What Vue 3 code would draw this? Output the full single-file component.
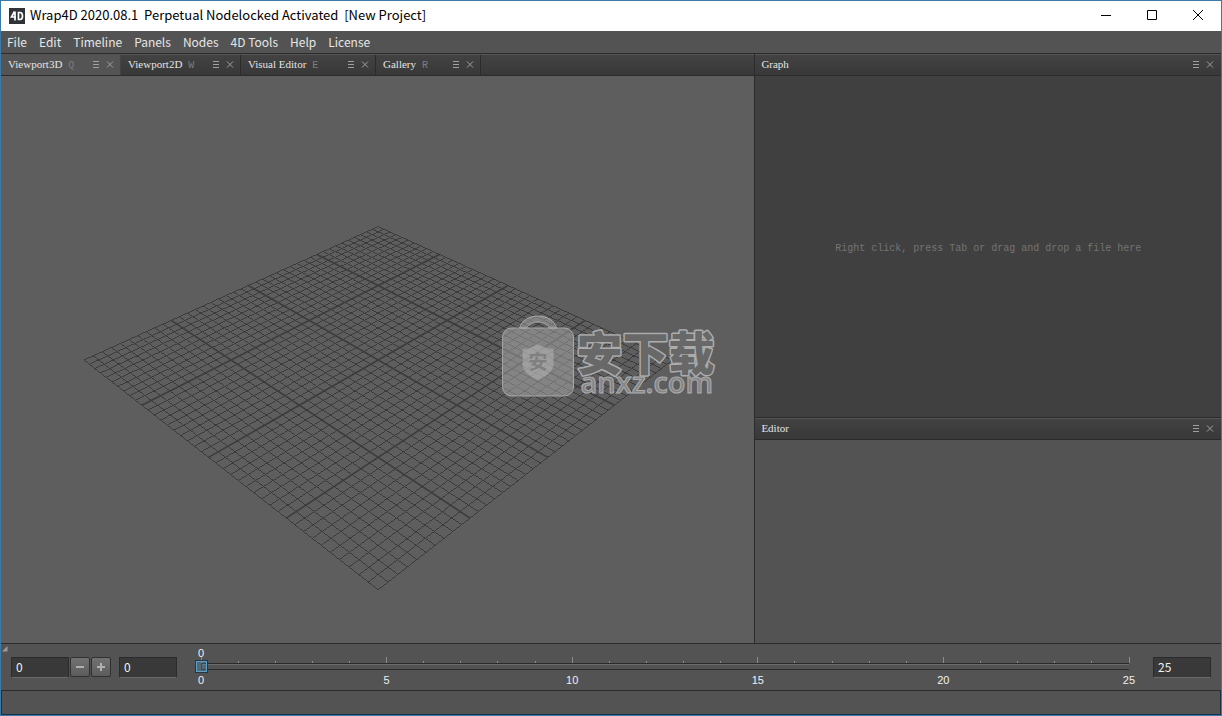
<script setup>
import { ref } from 'vue'

const menus = ['File', 'Edit', 'Timeline', 'Panels', 'Nodes', '4D Tools', 'Help', 'License']
const tabs = [
  { name: 'Viewport3D', key: 'Q', size: 'medium' },
  { name: 'Viewport2D', key: 'W', size: 'medium' },
  { name: 'Visual Editor', key: 'E', size: 'wide' },
  { name: 'Gallery', key: 'R', size: 'narrow' }
]
const active = ref('Viewport3D')
const step = ref('0')
const start = ref('0')
const end = ref('25')
const frame = ref(0)
const labels = [0, 5, 10, 15, 20, 25]
const ticks = Array.from({ length: 26 }, (_, i) => i)

// Perspective projection of the ground plane, u and v running from 0 to 1.
const top = [376.5, 150.5]
const right = [671, 284]
const bottom = [376.5, 514]
const left = [82, 284]
function project(u, v) {
  const dx1 = right[0] - bottom[0]
  const dx2 = left[0] - bottom[0]
  const dy1 = right[1] - bottom[1]
  const dy2 = left[1] - bottom[1]
  const sx = top[0] - right[0] + bottom[0] - left[0]
  const sy = top[1] - right[1] + bottom[1] - left[1]
  const den = dx1 * dy2 - dx2 * dy1
  const g = (sx * dy2 - dx2 * sy) / den
  const h = (dx1 * sy - sx * dy1) / den
  const w = g * u + h * v + 1
  const x = (right[0] - top[0] + g * right[0]) * u + (left[0] - top[0] + h * left[0]) * v + top[0]
  const y = (right[1] - top[1] + g * right[1]) * u + (left[1] - top[1] + h * left[1]) * v + top[1]
  return `${(x / w).toFixed(2)} ${(y / w).toFixed(2)}`
}
function gridPath(filter) {
  let d = ''
  for (let i = 0; i <= 40; i++) {
    if (!filter(i)) continue
    const t = i / 40
    d += `M${project(t, 0)}L${project(t, 1)}M${project(0, t)}L${project(1, t)}`
  }
  return d
}
const isMajor = (i) => i === 10 || i === 20 || i === 30
const minorGrid = gridPath((i) => !isMajor(i))
const majorGrid = gridPath(isMajor)
</script>

<template>
  <div class="window">
    <header class="titlebar">
      <svg class="logo" width="16" height="16" viewBox="0 0 16 16" aria-hidden="true">
        <rect width="16" height="16" fill="#2f3236" />
        <path d="M5.5 3.5L2.5 9H7M6 3.5V12.500" fill="none" stroke="#fff" stroke-width="1.700" />
        <path d="M9.500 4.500V11.500H11C13 11.500 13.500 10.500 13.500 8S13 4.500 11 4.500Z" fill="none" stroke="#fff" stroke-width="1.700" />
      </svg>
      <h1>Wrap4D 2020.08.1&nbsp; Perpetual Nodelocked Activated&nbsp; [New Project]</h1>
      <div class="controls">
        <button aria-label="Minimize"><svg width="12" height="12" viewBox="0 0 12 12"><path d="M1 5.500H11" /></svg></button>
        <button aria-label="Maximize"><svg width="12" height="12" viewBox="0 0 12 12"><path d="M1.500 0.500H10.500V9.500H1.500Z" /></svg></button>
        <button aria-label="Close"><svg width="12" height="12" viewBox="0 0 12 12"><path d="M1 0L11 10M11 0L1 10" /></svg></button>
      </div>
    </header>

    <nav class="menubar">
      <button v-for="m in menus" :key="m">{{ m }}</button>
    </nav>

    <main class="workspace">
      <section class="views">
        <div class="strip">
          <div v-for="t in tabs" :key="t.name" class="tab" :class="[t.size, { active: active === t.name }]">
            <button class="name" @click="active = t.name">{{ t.name }}<span class="key">{{ t.key }}</span></button>
            <button class="tool" :aria-label="t.name + ' menu'"><svg width="8" height="9" viewBox="0 0 8 9"><path d="M1 1.500H7M1 4.500H7M1 7.500H7" /></svg></button>
            <button class="tool" :aria-label="'Close ' + t.name"><svg width="8" height="9" viewBox="0 0 8 9"><path d="M1 1.500L7 7.500M7 1.500L1 7.500" /></svg></button>
          </div>
        </div>
        <svg class="scene" viewBox="-1 0 754 567">
          <path :d="minorGrid" class="minor" />
          <path :d="majorGrid" class="major" />
          <g class="badge">
            <path d="M518 252C522 236 551 236 555 252H548C544 244 529 244 525 252Z" />
            <rect x="501" y="252" width="71" height="68" rx="9" />
            <path class="shield" d="M536.500 268Q545 273 552 273V289Q551 298 536.500 304Q522 298 521 289V273Q528 273 536.500 268Z" />
          </g>
          <text class="seal" x="527" y="293">安</text>
          <text class="mark-cn" x="575" y="294">安下载</text>
          <text class="mark-url" x="579" y="317">anxz.com</text>
        </svg>
      </section>

      <aside class="side">
        <section class="graph">
          <div class="strip panel-head">
            <h2>Graph</h2>
            <button class="tool" aria-label="Graph menu"><svg width="8" height="9" viewBox="0 0 8 9"><path d="M1 1.500H7M1 4.500H7M1 7.500H7" /></svg></button>
            <button class="tool" aria-label="Close Graph"><svg width="8" height="9" viewBox="0 0 8 9"><path d="M1 1.500L7 7.500M7 1.500L1 7.500" /></svg></button>
          </div>
          <div class="drop"><p>Right click, press Tab or drag and drop a file here</p></div>
        </section>
        <section class="editor">
          <div class="strip panel-head">
            <h2>Editor</h2>
            <button class="tool" aria-label="Editor menu"><svg width="8" height="9" viewBox="0 0 8 9"><path d="M1 1.500H7M1 4.500H7M1 7.500H7" /></svg></button>
            <button class="tool" aria-label="Close Editor"><svg width="8" height="9" viewBox="0 0 8 9"><path d="M1 1.500L7 7.500M7 1.500L1 7.500" /></svg></button>
          </div>
        </section>
      </aside>
    </main>

    <section class="timeline" aria-label="Timeline">
      <svg class="grip" width="6" height="6" viewBox="0 0 6 6" aria-hidden="true"><path d="M5.500 0V5.500H0Z" fill="#9a9a9a" /></svg>
      <div class="stepper">
        <input v-model="step" class="field" aria-label="Current frame" />
        <button class="square" aria-label="Previous frame"><svg width="10" height="10" viewBox="0 0 10 10"><path d="M1 5H9" /></svg></button>
        <button class="square" aria-label="Next frame"><svg width="10" height="10" viewBox="0 0 10 10"><path d="M1 5H9M5 1V9" /></svg></button>
      </div>
      <input v-model="start" class="field" aria-label="Start frame" />
      <div class="ruler">
        <output class="current">{{ frame }}</output>
        <div class="track">
          <svg class="ticks" aria-hidden="true">
            <line v-for="t in ticks" :key="t" :x1="t * 4 + '%'" :x2="t * 4 + '%'" :y1="t % 5 ? 5 : 1" y2="7" />
          </svg>
          <div class="rail"></div>
          <input v-model="frame" class="slider" type="range" min="0" max="25" aria-label="Frame" />
        </div>
        <div class="labels"><span v-for="l in labels" :key="l">{{ l }}</span></div>
      </div>
      <input v-model="end" class="field" aria-label="End frame" />
    </section>
    <footer class="status"></footer>
  </div>
</template>

<style>
body {
  margin: 0;
  background: #535353;
}
</style>

<style scoped>
* {
  box-sizing: border-box;
}
button {
  margin: 0;
  padding: 0;
  border: 0;
  background: none;
  color: inherit;
  font: inherit;
}
h1, h2, p {
  margin: 0;
  font-weight: 400;
}
svg {
  display: block;
}
.window {
  display: flex;
  flex-direction: column;
  min-height: 100vh;
  border: 1px solid #3c79a6;
  background: #535353;
  font-family: "Noto Sans CJK SC", "Noto Sans", sans-serif;
}
.titlebar {
  display: flex;
  align-items: center;
  height: 30px;
  padding-left: 8px;
  background: #fff;
  color: #000;
}
.titlebar h1 {
  flex: 1;
  margin-left: 5px;
  padding-bottom: 2px;
  font-size: 13px;
  line-height: 20px;
  white-space: nowrap;
}
.controls {
  display: flex;
}
.controls button {
  display: grid;
  place-items: center;
  width: 46px;
  height: 30px;
}
.controls path {
  fill: none;
  stroke: #000;
}
.menubar {
  display: flex;
  gap: 12px;
  height: 22px;
  padding-left: 6px;
  color: #e6e6e6;
  font-size: 12px;
  line-height: 20px;
}
.workspace {
  display: flex;
  flex: 1;
  border-top: 1px solid #2b2b2b;
}
.views {
  display: flex;
  flex: 754 1 0;
  flex-direction: column;
  min-width: 0;
  background: #5e5e5e;
}
.strip {
  display: flex;
  height: 22px;
  border-top: 1px solid #555;
  border-bottom: 1px solid #2b2b2b;
  background: linear-gradient(#424242, #383838);
  color: #e4e4e4;
  font: 11px/18px "Liberation Serif", serif;
}
.tab {
  display: flex;
  align-items: center;
  padding: 0 6px 2px 7px;
  border-right: 1px solid #2b2b2b;
}
.tab.active {
  border-right-color: #444;
  background: #545454;
}
.medium {
  width: 120px;
}
.wide {
  width: 135px;
}
.narrow {
  width: 105px;
}
.name {
  flex: 1;
  text-align: left;
  white-space: nowrap;
}
.key {
  margin-left: 6px;
  color: #7d7d7d;
  font: 10px "Liberation Mono", monospace;
}
.tool {
  margin-left: 6px;
}
.tool path {
  fill: none;
  stroke: #a0a0a0;
}
.scene {
  flex: 1;
  width: 100%;
  min-height: 0;
}
.minor {
  fill: none;
  stroke: #3c3c3c;
  shape-rendering: crispEdges;
}
.major {
  fill: none;
  stroke: #3c3c3c;
  stroke-width: 1.6;
}
.badge {
  fill: #b4b4b4;
  fill-opacity: 0.45;
  stroke: #a8a8a8;
}
.badge .shield {
  fill: #c0c0c0;
  stroke: none;
}
.seal {
  fill: #808080;
  font: 700 19px "Noto Sans CJK SC", sans-serif;
}
.mark-cn {
  fill: #686868;
  stroke: #acacac;
  stroke-width: 3;
  stroke-linejoin: round;
  paint-order: stroke;
  font: 900 46px "Noto Sans CJK SC", sans-serif;
}
.mark-url {
  fill: #858585;
  stroke: #acacac;
  font: 600 29px "Open Sans", sans-serif;
}
.side {
  display: flex;
  flex: 466 1 0;
  flex-direction: column;
  min-width: 0;
  border-left: 1px solid #2b2b2b;
}
.graph {
  display: flex;
  flex: 364 1 0;
  flex-direction: column;
  background: #404040;
}
.editor {
  flex: 225 1 0;
  border-top: 1px solid #2b2b2b;
}
.panel-head {
  align-items: center;
  padding: 0 7px 2px 6px;
}
.panel-head h2 {
  flex: 1;
  font-size: 11px;
}
.drop {
  display: grid;
  flex: 1;
  place-items: center;
  padding-top: 4px;
  color: #747474;
  font: 10px/16px "Liberation Mono", monospace;
}
.timeline {
  position: relative;
  display: flex;
  align-items: center;
  height: 47px;
  padding: 0 10px;
  border-top: 1px solid #2b2b2b;
  color: #f0f0f0;
  font: 11px/12px "Liberation Sans", sans-serif;
}
.grip {
  position: absolute;
  top: 2px;
  left: 1px;
}
.stepper {
  display: flex;
  gap: 1px;
  margin-right: 8px;
}
.field {
  width: 58px;
  height: 21px;
  padding: 0 4px 2px;
  border: 1px solid #2b2b2b;
  border-bottom-color: #6a6a6a;
  background: #393939;
  color: #f0f0f0;
  font: 12px/18px "Noto Sans CJK SC", sans-serif;
}
.square {
  display: grid;
  place-items: center;
  width: 20px;
  height: 20px;
  border: 1px solid #303030;
  border-radius: 2px;
  background: linear-gradient(#727272, #5c5c5c);
}
.square path {
  fill: none;
  stroke: #b0b0b0;
  stroke-width: 2;
}
.ruler {
  flex: 1;
  margin: 0 24px 2px;
}
.current {
  display: block;
  width: 0;
  height: 12px;
  text-indent: -3px;
}
.track {
  display: grid;
  height: 15px;
}
.track > * {
  grid-area: 1 / 1;
}
.ticks {
  width: 100%;
  height: 7px;
  margin-top: -3px;
  overflow: visible;
}
.ticks line {
  stroke: #8c8c8c;
  shape-rendering: crispEdges;
}
.rail {
  height: 7px;
  margin-top: 4px;
  border: 1px solid #2b2b2b;
  border-right: 0;
  box-shadow: inset 0 1px #6c6c6c;
}
.slider {
  width: auto;
  height: 13px;
  margin: 1px -6px 0;
  background: transparent;
  appearance: none;
}
.slider::-webkit-slider-thumb {
  width: 13px;
  height: 13px;
  border: 1px solid #20384a;
  background: rgba(90, 150, 190, 0.3);
  box-shadow: inset 0 0 0 1px #5d9fcb;
  appearance: none;
}
.labels {
  display: flex;
  justify-content: space-between;
}
.labels span {
  display: flex;
  justify-content: center;
  width: 0;
}
.status {
  height: 25px;
  border: 1px solid #16324a;
  border-top-color: #2b2b2b;
}
</style>
